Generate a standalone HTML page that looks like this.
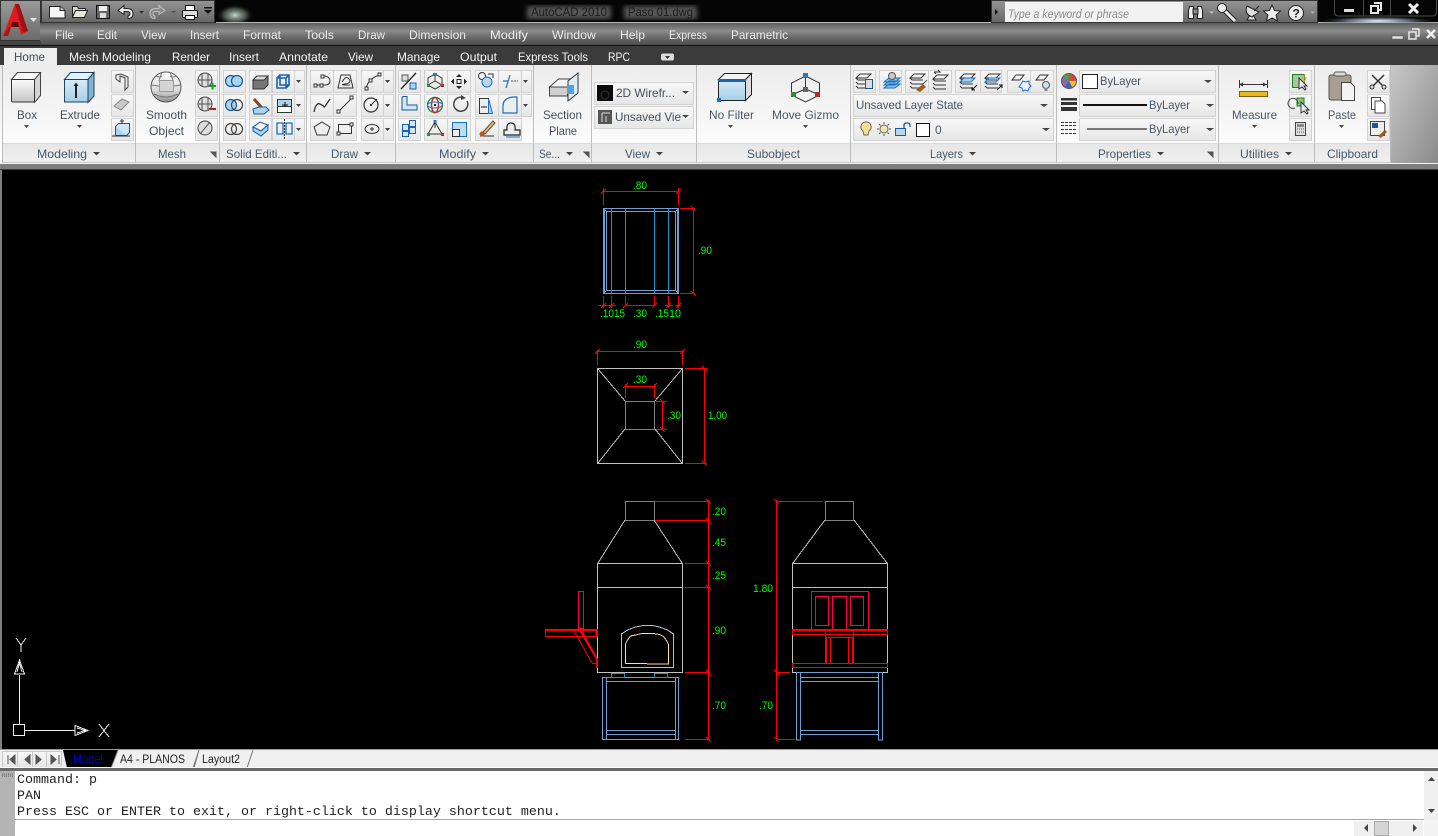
<!DOCTYPE html>
<html><head><meta charset="utf-8"><title>AutoCAD 2010 - Paso 01.dwg</title>
<style>
html,body{margin:0;padding:0;background:#000;overflow:hidden}
svg{display:block;font-family:"Liberation Sans",sans-serif}
.m{font-size:12px;fill:#ececec}
.t{font-size:12px;fill:#f4f4f4}
.r{font-size:12px;fill:#46505c}
.p{font-size:12px;fill:#47586a}
.g{font-size:11px;fill:#00ff00}
.c{font-family:"Liberation Mono",monospace;font-size:13.33px;fill:#222}
.n{fill:none;stroke:#333;stroke-width:1}
.cr{shape-rendering:crispEdges}
.cr path,.cr rect{fill:none}
.red path,.red rect{stroke:#ff0000}
.pk path,.pk rect{stroke:#ff0040}
.wh path,.wh rect{stroke:#c0c0c0}
.gy path,.gy rect{stroke:#808080}
.st path,.st rect{stroke:#6f9fd0}
.cy path,.cy rect{stroke:#1b95c8}
</style></head>
<body>
<svg width="1438" height="836" viewBox="0 0 1438 836" xmlns="http://www.w3.org/2000/svg">
<defs>
<linearGradient id="bar" x1="0" y1="0" x2="0" y2="1"><stop offset="0" stop-color="#5c5c5c"/><stop offset=".35" stop-color="#8c8c8c"/><stop offset=".65" stop-color="#6a6a6a"/><stop offset="1" stop-color="#4c4c4c"/></linearGradient>
<linearGradient id="qat" x1="0" y1="0" x2="0" y2="1"><stop offset="0" stop-color="#959595"/><stop offset="1" stop-color="#666"/></linearGradient>
<linearGradient id="app" x1="0" y1="0" x2="0" y2="1"><stop offset="0" stop-color="#9a9a9a"/><stop offset="1" stop-color="#6a6a6a"/></linearGradient>
<linearGradient id="rib" x1="0" y1="0" x2="0" y2="1"><stop offset="0" stop-color="#ececec"/><stop offset="1" stop-color="#ffffff"/></linearGradient>
<linearGradient id="lab" x1="0" y1="0" x2="0" y2="1"><stop offset="0" stop-color="#e6e6e6"/><stop offset="1" stop-color="#f0f0f0"/></linearGradient>
<linearGradient id="btn" x1="0" y1="0" x2="0" y2="1"><stop offset="0" stop-color="#f8f8f8"/><stop offset="1" stop-color="#e6e6e6"/></linearGradient>
<linearGradient id="end" x1="0" y1="0" x2="1" y2="1"><stop offset="0" stop-color="#c8c8c8"/><stop offset="1" stop-color="#8a8a8a"/></linearGradient>
<linearGradient id="bluebox" x1="0" y1="0" x2="0" y2="1"><stop offset="0" stop-color="#d8ecf8"/><stop offset="1" stop-color="#a4cfe8"/></linearGradient>
<linearGradient id="wbox" x1="0" y1="0" x2="0" y2="1"><stop offset="0" stop-color="#fbfbfb"/><stop offset="1" stop-color="#c4c4c4"/></linearGradient>
<linearGradient id="sph" x1="0" y1="0" x2="0" y2="1"><stop offset="0" stop-color="#fdfdfd"/><stop offset=".6" stop-color="#dcdcdc"/><stop offset="1" stop-color="#8f8f8f"/></linearGradient>
<radialGradient id="glo1" cx=".5" cy=".6" r=".5"><stop offset="0" stop-color="#c8d8cc"/><stop offset=".6" stop-color="#5a6a60" stop-opacity=".7"/><stop offset="1" stop-color="#000" stop-opacity="0"/></radialGradient>
<radialGradient id="glo2" cx=".5" cy=".5" r=".5"><stop offset="0" stop-color="#f4f8ff"/><stop offset=".5" stop-color="#8898a8" stop-opacity=".7"/><stop offset="1" stop-color="#000" stop-opacity="0"/></radialGradient>
<filter id="bl2"><feGaussianBlur stdDeviation="2.500"/></filter>
<rect id="B" width="22" height="22" fill="url(#btn)" stroke="#d2d2d2" x=".5" y=".5"/>
<rect id="B2" width="46" height="22" fill="url(#btn)" stroke="#d2d2d2" x=".5" y=".5"/>
<path id="A" d="M0 0h7l-3.500 3.500z" fill="#444"/>
<path id="L" d="M0 5l4-4h11l-4 4zM0 5l2 2h11M0 9l2 2h11M0 13l2 2h11" fill="none" stroke="#333"/>
</defs>

<!-- title bar -->
<rect width="1438" height="23" fill="#050505"/>
<rect x="216" y="2" width="38" height="22" fill="url(#glo1)"/>
<rect x="527" y="6" width="84" height="13" fill="#555" filter="url(#bl2)"/>
<rect x="624" y="6" width="73" height="13" fill="#555" filter="url(#bl2)"/>
<text x="531" y="16" font-size="12" fill="#1c1c1c" textLength="76" lengthAdjust="spacingAndGlyphs">AutoCAD 2010</text>
<text x="628" y="16" font-size="12" fill="#1c1c1c" textLength="65" lengthAdjust="spacingAndGlyphs">Paso 01.dwg</text>
<rect x="216" y="22" width="1222" height="1" fill="#b8b8b8"/>
<!-- app menu button -->
<rect x="0.500" y="0.500" width="40" height="40" fill="url(#app)" stroke="#333"/>
<path d="M3 36 L15 4 L19 4 L28 31 L21 35 L19 27 L11 27 L8 36z" fill="#e0181f"/>
<path d="M15 4 L19 4 L28 31 L23 32z" fill="#a01218"/>
<path d="M12 22h6l1 5h-8z" fill="#5c0a0e"/>
<path d="M3 36l5 0 3-9 -2 0z" fill="#b01218"/>
<path d="M30 18h7l-3.500 4z" fill="#e8e8e8"/>
<!-- QAT -->
<rect x="41.500" y="0.500" width="173" height="22" fill="url(#qat)" stroke="#333"/>
<path d="M49.500 6.500h11l4.500 4v7.500h-15.500z" fill="#f6f6f6" stroke="#222"/><path d="M60 6.500v4h5" fill="#ccc" stroke="#222"/>
<path d="M72.500 17.500v-11h5l1 2h7v2" fill="#d8d8c8" stroke="#222"/><path d="M72.500 17.500l3-7h12l-3 7z" fill="#e8e8d8" stroke="#222"/>
<rect x="96.500" y="5.500" width="13" height="13" fill="#666" stroke="#111"/><rect x="99" y="6" width="8" height="5" fill="#f0f0f0"/><rect x="100" y="13" width="6" height="5" fill="#ddd"/>
<path d="M118 10.500l6-5v3h3q6 0 6 5t-5 5v-2.500q2-.5 2-2.500t-3-2h-3v3z" fill="#eee" stroke="#222"/>
<path d="M139 11h5l-2.500 2.500z" fill="#333"/>
<path d="M165 10.500l-6-5v3h-3q-6 0-6 5t5 5v-2.500q-2-.5-2-2.500t3-2h3v3z" fill="#8a8a8a" stroke="#c0c0c0"/>
<path d="M171 11h5l-2.500 2.500z" fill="#555"/>
<rect x="182.500" y="10.500" width="15" height="7" rx="1" fill="#ddd" stroke="#111"/><rect x="185.500" y="5.500" width="9" height="5" fill="#fff" stroke="#111"/><rect x="185.500" y="15.500" width="9" height="4" fill="#fff" stroke="#111"/>
<rect x="204" y="7" width="8" height="1.500" fill="#111"/><path d="M204 10h8l-4 4z" fill="#111"/>

<!-- search -->
<rect x="991.500" y="0.500" width="326" height="22" fill="url(#qat)" stroke="#333"/>
<path d="M995 9l3 3-3 3z" fill="#111"/>
<rect x="1005" y="2" width="178" height="20" fill="#f2f2f2"/>
<text x="1008" y="18" font-size="11.500" font-style="italic" fill="#8a8a8a" textLength="121" lengthAdjust="spacingAndGlyphs">Type a keyword or phrase</text>
<path d="M1188.500 10.500l1-4h4v12h-5zM1197.500 6.500h4l1 4v8h-5z" fill="#eee" stroke="#222"/><rect x="1193" y="9" width="5" height="5" fill="#888" stroke="#222"/>
<path d="M1209 11.500h5l-2.500 2z" fill="#ccc"/>
<path d="M1222 8l13 13" stroke="#222" stroke-width="5"/><path d="M1222 8l13 13" stroke="#eee" stroke-width="3"/><circle cx="1222" cy="8" r="4.500" fill="#eee" stroke="#222"/>
<path d="M1247 6q-3 8 5 11l7-5zM1250 15l-3 5h9l-3-5M1254 11l5-5" fill="#ddd" stroke="#222"/>
<path d="M1272 5l2.500 5.500 6 .5-4.500 4 1.500 6-5.500-3-5.500 3 1.500-6-4.500-4 6-.5z" fill="#eee" stroke="#222"/>
<circle cx="1296" cy="13" r="7.500" fill="#eee" stroke="#222"/><text x="1292.500" y="17.500" font-size="12" font-weight="bold" fill="#222">?</text>
<path d="M1310 11.500h5l-2.500 2z" fill="#bbb"/>
<!-- window buttons -->
<ellipse cx="1378" cy="21" rx="62" ry="5" fill="url(#glo2)"/>
<path d="M1334.500 0v12q0 4 4 4h94q4 0 4-4V0M1363.500 0v16M1390.500 0v16" fill="none" stroke="#4a4a4a"/>
<rect x="1344" y="9" width="10" height="3" fill="#ddd"/>
<path d="M1371 6h7v7h-7zM1374 3h7v7h-3" fill="none" stroke="#e6e6e6" stroke-width="2"/>
<path d="M1409 4l9 9M1418 4l-9 9" stroke="#f0f0f0" stroke-width="3"/>

<!-- menu bar -->
<rect x="40" y="23" width="1398" height="22" fill="url(#bar)"/>
<rect x="0" y="41" width="41" height="4" fill="#444"/>
<rect x="0" y="45" width="1438" height="1" fill="#111"/>
<g class="m">
<text x="55" y="39" textLength="19" lengthAdjust="spacingAndGlyphs">File</text>
<text x="97" y="39" textLength="20" lengthAdjust="spacingAndGlyphs">Edit</text>
<text x="141" y="39" textLength="25" lengthAdjust="spacingAndGlyphs">View</text>
<text x="190" y="39" textLength="29" lengthAdjust="spacingAndGlyphs">Insert</text>
<text x="243" y="39" textLength="38" lengthAdjust="spacingAndGlyphs">Format</text>
<text x="305" y="39" textLength="29" lengthAdjust="spacingAndGlyphs">Tools</text>
<text x="358" y="39" textLength="27" lengthAdjust="spacingAndGlyphs">Draw</text>
<text x="409" y="39" textLength="57" lengthAdjust="spacingAndGlyphs">Dimension</text>
<text x="490" y="39" textLength="38" lengthAdjust="spacingAndGlyphs">Modify</text>
<text x="552" y="39" textLength="44" lengthAdjust="spacingAndGlyphs">Window</text>
<text x="620" y="39" textLength="25" lengthAdjust="spacingAndGlyphs">Help</text>
<text x="669" y="39" textLength="38" lengthAdjust="spacingAndGlyphs">Express</text>
<text x="731" y="39" textLength="57" lengthAdjust="spacingAndGlyphs">Parametric</text>
</g>
<rect x="1392" y="36" width="11" height="3" fill="#e4e4e4" stroke="#555" stroke-width=".5"/>
<path d="M1409 32h7v7h-7zM1412 29h7v7h-3" fill="none" stroke="#e8e8e8" stroke-width="1.500"/>
<path d="M1427 30l8 8M1435 30l-8 8" stroke="#eee" stroke-width="2.500"/>

<!-- ribbon tabs -->
<rect x="0" y="46" width="1438" height="19" fill="#3b3b3b"/>
<rect x="4" y="48" width="53" height="17" fill="#eeeeee"/>
<text x="14" y="61" font-size="12" fill="#3d4b5a" textLength="31" lengthAdjust="spacingAndGlyphs">Home</text>
<g class="t">
<text x="69" y="61" textLength="82" lengthAdjust="spacingAndGlyphs">Mesh Modeling</text>
<text x="172" y="61" textLength="38" lengthAdjust="spacingAndGlyphs">Render</text>
<text x="229" y="61" textLength="30" lengthAdjust="spacingAndGlyphs">Insert</text>
<text x="279" y="61" textLength="49" lengthAdjust="spacingAndGlyphs">Annotate</text>
<text x="348" y="61" textLength="25" lengthAdjust="spacingAndGlyphs">View</text>
<text x="397" y="61" textLength="43" lengthAdjust="spacingAndGlyphs">Manage</text>
<text x="460" y="61" textLength="37" lengthAdjust="spacingAndGlyphs">Output</text>
<text x="518" y="61" textLength="70" lengthAdjust="spacingAndGlyphs">Express Tools</text>
<text x="608" y="61" textLength="22" lengthAdjust="spacingAndGlyphs">RPC</text>
</g>
<rect x="661" y="53.500" width="13" height="7" rx="2" fill="#dcdcdc"/><path d="M665 56h5l-2.500 3z" fill="#333"/>

<!-- ribbon body -->
<rect x="0" y="65" width="1391" height="98" fill="url(#rib)"/>
<rect x="1391" y="65" width="47" height="98" fill="url(#end)"/>
<rect x="2" y="143" width="1389" height="19" fill="url(#lab)"/>
<rect x="2" y="143" width="1389" height="1" fill="#dcdcdc"/>
<rect x="2" y="162" width="1389" height="1" fill="#c8c8c8"/>
<g fill="#bdbdbd">
<rect x="2" y="65" width="1" height="98"/><rect x="135" y="65" width="1" height="98"/><rect x="219" y="65" width="1" height="98"/><rect x="306" y="65" width="1" height="98"/><rect x="395" y="65" width="1" height="98"/><rect x="533" y="65" width="1" height="98"/><rect x="591" y="65" width="1" height="98"/><rect x="696" y="65" width="1" height="98"/><rect x="850" y="65" width="1" height="98"/><rect x="1056" y="65" width="1" height="98"/><rect x="1218" y="65" width="1" height="98"/><rect x="1314" y="65" width="1" height="98"/><rect x="1390" y="65" width="1" height="98"/>
</g>
<rect x="0" y="163" width="1438" height="1" fill="#f4f4f4"/>
<rect x="0" y="164" width="1438" height="5" fill="#7e7e7e"/>
<rect x="0" y="169" width="1438" height="1" fill="#3a3a3a"/>

<!-- panel labels -->
<g class="p">
<text x="37" y="158" textLength="50" lengthAdjust="spacingAndGlyphs">Modeling</text>
<text x="158" y="158" textLength="28" lengthAdjust="spacingAndGlyphs">Mesh</text>
<text x="226" y="158" textLength="61" lengthAdjust="spacingAndGlyphs">Solid Editi...</text>
<text x="331" y="158" textLength="27" lengthAdjust="spacingAndGlyphs">Draw</text>
<text x="439" y="158" textLength="37" lengthAdjust="spacingAndGlyphs">Modify</text>
<text x="539" y="158" textLength="21" lengthAdjust="spacingAndGlyphs">Se...</text>
<text x="625" y="158" textLength="25" lengthAdjust="spacingAndGlyphs">View</text>
<text x="747" y="158" textLength="53" lengthAdjust="spacingAndGlyphs">Subobject</text>
<text x="930" y="158" textLength="33" lengthAdjust="spacingAndGlyphs">Layers</text>
<text x="1098" y="158" textLength="53" lengthAdjust="spacingAndGlyphs">Properties</text>
<text x="1240" y="158" textLength="39" lengthAdjust="spacingAndGlyphs">Utilities</text>
<text x="1327" y="158" textLength="51" lengthAdjust="spacingAndGlyphs">Clipboard</text>
</g>
<use href="#A" x="93" y="152"/><use href="#A" x="293" y="152"/><use href="#A" x="364" y="152"/><use href="#A" x="482" y="152"/><use href="#A" x="566" y="152"/><use href="#A" x="656" y="152"/><use href="#A" x="969" y="152"/><use href="#A" x="1157" y="152"/><use href="#A" x="1285" y="152"/>
<path d="M211 152l5 0 0 5zM211 152l5 5" fill="#555" stroke="#555"/><path d="M584 152h5v5zM584 152l5 5" fill="#555" stroke="#555"/><path d="M1208 152h5v5zM1208 152l5 5" fill="#555" stroke="#555"/>

<!-- big labels -->
<g class="r">
<text x="17" y="119" textLength="20" lengthAdjust="spacingAndGlyphs">Box</text>
<text x="60" y="119" textLength="40" lengthAdjust="spacingAndGlyphs">Extrude</text>
<text x="146" y="119" textLength="41" lengthAdjust="spacingAndGlyphs">Smooth</text>
<text x="149" y="135" textLength="35" lengthAdjust="spacingAndGlyphs">Object</text>
<text x="543" y="119" textLength="39" lengthAdjust="spacingAndGlyphs">Section</text>
<text x="549" y="135" textLength="28" lengthAdjust="spacingAndGlyphs">Plane</text>
</g>
<g class="p">
<text x="709" y="119" textLength="45" lengthAdjust="spacingAndGlyphs">No Filter</text>
<text x="772" y="119" textLength="67" lengthAdjust="spacingAndGlyphs">Move Gizmo</text>
<text x="1232" y="119" textLength="45" lengthAdjust="spacingAndGlyphs">Measure</text>
<text x="1328" y="119" textLength="28" lengthAdjust="spacingAndGlyphs">Paste</text>
</g>
<path d="M24 125h5l-2.500 3zM77 125h5l-2.500 3zM728 125h5l-2.500 3zM803 125h5l-2.500 3zM1252 125h5l-2.500 3zM1339 125h5l-2.500 3z" fill="#444"/>

<!-- Big icons -->
<path d="M11.500 79.500l6-7h23v23l-6 7z" fill="#d4d4d4" stroke="#444"/><path d="M11.500 79.500l6-7h23l-6 7z" fill="#f8f8f8" stroke="#444"/><rect x="11.500" y="79.500" width="23" height="22.500" rx="1" fill="url(#wbox)" stroke="#333"/>
<path d="M64.500 79.500l6-7h23.500l-6 7z" fill="#e0f4fc" stroke="#24415c"/><path d="M88 79.500l6-7v23.500l-6 6.500z" fill="#7fb4d4" stroke="#24415c"/><rect x="64.500" y="79.500" width="23.500" height="22.500" fill="url(#bluebox)" stroke="#24415c"/><path d="M75 98V86h-1.500l2.500-3.500 2.500 3.500H77v12z" fill="#222"/>
<circle cx="166" cy="87" r="15" fill="url(#sph)" stroke="#555"/><path d="M151.500 85q14.500 3 29 0M156 76q4 2 6 0M176 76q-4 2-6 0M162 72q-3 8-3 9M170 72q3 8 3 9M154 94q12 6 24 0" fill="none" stroke="#777"/><rect x="159.500" y="80.500" width="14" height="11" fill="#d4d4d4" stroke="#999"/>
<path d="M549.500 87l9-8h14l-5 8z" fill="#f4f4f4" stroke="#444"/><path d="M549.500 87h18v9h-18z" fill="#cfcfcf" stroke="#444"/><path d="M568 81l10-8v20l-10 8z" fill="#dcecf6" stroke="#333"/><rect x="567" y="85" width="7" height="9" fill="#5aa0d8"/>
<rect x="718.500" y="79.500" width="27" height="21" fill="url(#bluebox)" stroke="#222"/><path d="M718.500 79.500l6-6h27l-6 6z" fill="#f2f2f2" stroke="#222"/><path d="M745.500 79.500l6-6v21l-6 6z" fill="#ddd" stroke="#222"/><rect x="718" y="79" width="28" height="3" fill="#1a62b0"/><rect x="717" y="98" width="4" height="4" fill="#1a70c8"/>
<path d="M805.500 76l14 7v12l-14 7-14-7V83zM805.500 89v-13M805.500 89l-14 6M805.500 89l14 6" fill="none" stroke="#333"/><rect x="803" y="73" width="5" height="5" fill="#2a78c8"/><rect x="791" y="92" width="5" height="5" fill="#2c8c3a"/><rect x="815" y="92" width="5" height="5" fill="#b82a2a"/><rect x="803" y="87" width="5" height="5" fill="#666"/>
<path d="M1239.500 80v8M1267.500 80v8M1239 84.500h28" class="n"/><path d="M1239 84.500l4-2v4zM1267 84.500l-4-2v4z" fill="#333"/><rect x="1239.500" y="91.500" width="28" height="5" fill="#e8b820" stroke="#7a6010"/>
<rect x="1329" y="75" width="22" height="25" rx="2" fill="#a89f92" stroke="#555"/><rect x="1334" y="72" width="12" height="4" rx="2" fill="#ddd" stroke="#555"/><path d="M1341.500 82.500h9l4 4v14h-13z" fill="#f4f4f4" stroke="#444"/>

<!-- Modeling small -->
<use href="#B" x="111" y="70"/><use href="#B" x="111" y="94"/><use href="#B" x="111" y="118"/>
<path d="M116 75l5-1 7 3v10l-3 3v-12l-5-2v6l-4-3z" fill="#eee" stroke="#444"/>
<path d="M114 106l8-7 7 3-8 8z" fill="#c8c8c8" stroke="#888"/>
<rect x="115.500" y="126.500" width="11" height="9" fill="#a8d4ec" stroke="#1a5a9a"/><path d="M115.500 126.500l3-3h11v9l-3 3" fill="#cfe6f4" stroke="#1a5a9a"/><path d="M122 119v5M120 121h4M112 136h18" stroke="#333" fill="none"/>
<!-- Mesh small -->
<use href="#B" x="195" y="70"/><use href="#B" x="195" y="94"/><use href="#B" x="195" y="118"/>
<g fill="#ddd" stroke="#444"><circle cx="205" cy="80" r="7"/><circle cx="205" cy="104" r="7"/><circle cx="205" cy="128" r="7"/></g>
<path d="M198 80h14M202 73v14M208 73v14M198 104h14M202 97v14M208 97v14M200 134l10-12" stroke="#555" fill="none"/>
<path d="M209 85h7v2h-7zM211.500 82.500h2v7h-2z" fill="#1c9a28"/><rect x="209" y="108" width="7" height="2" fill="#b81c1c"/>
<!-- Solid Editing -->
<use href="#B" x="223" y="70"/><use href="#B" x="223" y="94"/><use href="#B" x="223" y="118"/>
<use href="#B" x="249" y="70"/><use href="#B" x="249" y="94"/><use href="#B" x="249" y="118"/>
<use href="#B" x="272" y="70"/><use href="#B" x="272" y="94"/><use href="#B" x="272" y="118"/>
<g fill="url(#btn)" stroke="#d2d2d2"><rect x="294.500" y="70.500" width="10" height="22"/><rect x="294.500" y="94.500" width="10" height="22"/><rect x="294.500" y="118.500" width="10" height="22"/></g>
<path d="M296 80h5l-2.500 3zM296 104h5l-2.500 3zM296 128h5l-2.500 3z" fill="#444"/>
<g fill="#a8d4ec" stroke="#1a5a9a" stroke-width="1.200"><circle cx="231" cy="81" r="5.500"/><circle cx="237" cy="81" r="5.500"/><circle cx="231" cy="105" r="5.500"/><circle cx="237" cy="105" r="5.500" fill="none" stroke="#444"/><circle cx="231" cy="129" r="5.500" fill="none" stroke="#444"/><circle cx="237" cy="129" r="5.500" fill="none" stroke="#444"/></g>
<path d="M253 80l4-4h11v9l-4 4h-11z" fill="#777" stroke="#333"/><path d="M257 76h11l-4 4h-11z" fill="#ddd" stroke="#333"/>
<path d="M254 99l8 9" stroke="#8a4030" stroke-width="3" fill="none"/><path d="M253 109l6-2h7l3 3-5 4h-10z" fill="#a8d4ec" stroke="#1a5a9a"/>
<path d="M253 127l7-5 8 3-7 6z" fill="#f4f4f4" stroke="#1a5a9a"/><path d="M253 127v4l8 5 7-6v-5l-7 6z" fill="#a8d4ec" stroke="#1a5a9a"/>
<path d="M277 78h9v10h-9zM280 75h9v10h-9zM277 78l3-3M286 78l3-3M286 88l3-3" fill="none" stroke="#1a62b0" stroke-width="1.600"/>
<rect x="277.500" y="99.500" width="14" height="13" fill="#fff" stroke="#333"/><rect x="277.500" y="99.500" width="14" height="7" fill="#a8d4ec" stroke="#333"/><path d="M282 105h6M285 102v5" stroke="#111" fill="none"/>
<path d="M277 123h6v11h-6zM286 123h6v11h-6z" fill="none" stroke="#1a6ec4" stroke-width="1.300"/><path d="M284.500 119v20" stroke="#333" stroke-dasharray="2 1"/>
<!-- Draw -->
<use href="#B2" x="310" y="70"/><use href="#B2" x="310" y="94"/><use href="#B2" x="310" y="118"/>
<path d="M333.500 70v23M333.500 94v23M333.500 118v23" stroke="#d2d2d2"/>
<use href="#B" x="361" y="70"/><use href="#B" x="361" y="94"/><use href="#B" x="361" y="118"/>
<g fill="url(#btn)" stroke="#d2d2d2"><rect x="383.500" y="70.500" width="10" height="22"/><rect x="383.500" y="94.500" width="10" height="22"/><rect x="383.500" y="118.500" width="10" height="22"/></g>
<path d="M385 80h5l-2.500 3zM385 104h5l-2.500 3zM385 128h5l-2.500 3z" fill="#444"/>
<path d="M315 85h10q5 0 5-4t-5-5h-2" class="n"/><g fill="#fff" stroke="#333"><rect x="314" y="84" width="3" height="3"/><rect x="320" y="84" width="3" height="3"/><rect x="321" y="75" width="3" height="3"/></g>
<path d="M338 88l3-13h9l3 13zM342 82q4-7 7-3t-4 5 5 1" class="n"/>
<path d="M366 89q2-11 14-14" class="n"/><g fill="#fff" stroke="#333"><rect x="365" y="87" width="3" height="3"/><rect x="378" y="73" width="3" height="3"/><rect x="369" y="79" width="3" height="3"/></g>
<path d="M314 112q2-10 6-8t4 3 6-8" fill="none" stroke="#333" stroke-width="1.300"/>
<path d="M338 112l14-14" class="n"/><g fill="#fff" stroke="#333"><rect x="337" y="110" width="3" height="3"/><rect x="350" y="96" width="3" height="3"/></g>
<circle cx="371" cy="105" r="7" fill="none" stroke="#333" stroke-width="1.200"/><path d="M371 105l6-6" class="n"/><rect x="370" y="104" width="2" height="2" fill="#333"/>
<path d="M322 122l8 5-3 8h-10l-3-8z" fill="#eee" stroke="#333"/>
<rect x="338.500" y="124.500" width="13" height="9" class="n" fill="none"/><g fill="#fff" stroke="#333"><rect x="337" y="132" width="3" height="3"/><rect x="350" y="123" width="3" height="3"/></g>
<ellipse cx="372" cy="129" rx="7" ry="4.500" fill="none" stroke="#333"/><path d="M370 129h4M372 127v4" stroke="#333"/>
<!-- Modify -->
<use href="#B" x="398" y="70"/><use href="#B" x="398" y="94"/><use href="#B" x="398" y="118"/>
<use href="#B2" x="424" y="70"/><use href="#B2" x="424" y="94"/><use href="#B2" x="424" y="118"/>
<path d="M447.500 70v23M447.500 94v23M447.500 118v23" stroke="#d2d2d2"/>
<use href="#B2" x="475" y="70"/><use href="#B2" x="475" y="94"/><use href="#B2" x="475" y="118"/>
<path d="M498.500 70v23M498.500 94v23M498.500 118v23" stroke="#d2d2d2"/>
<g fill="url(#btn)" stroke="#d2d2d2"><rect x="521.500" y="70.500" width="10" height="22"/><rect x="521.500" y="94.500" width="10" height="22"/></g>
<path d="M523 80h5l-2.500 3zM523 104h5l-2.500 3z" fill="#444"/>
<path d="M401 89l15-16" stroke="#222" stroke-width="1.300"/><path d="M402 75h6v6h-6z" fill="#ddd" stroke="#555"/><path d="M410 83h6v6h-6z" fill="#a8d4ec" stroke="#1a62b0"/>
<path d="M402 110V98q0-1.500 2-1.500h3v8.500h10v5z" fill="#cfe6f4" stroke="#1a5a9a"/>
<g fill="#cfe6f4" stroke="#1a62b0"><rect x="402.500" y="124.500" width="6" height="6"/><rect x="409.500" y="120.500" width="6" height="6"/><rect x="402.500" y="131.500" width="6" height="5"/><rect x="409.500" y="127.500" width="6" height="6"/></g>
<path d="M435 74l7 4v7l-7 4-7-4v-7zM435 81l-7 4M435 81l7 4M435 81v-7" class="n"/><rect x="433" y="73" width="4" height="3" fill="#2a78c8"/><rect x="427" y="84" width="3" height="3" fill="#2c8c3a"/><rect x="441" y="84" width="3" height="3" fill="#b82a2a"/>
<path d="M459 74l3 3h-6zM459 89l3-3h-6zM451 81.500l3-3v6zM467 81.500l-3-3v6z" fill="#222"/><rect x="457" y="79.500" width="4" height="4" fill="none" stroke="#222"/>
<circle cx="435" cy="105" r="7.500" fill="none" stroke="#2c8c3a" stroke-width="1.400"/><ellipse cx="435" cy="105" rx="3.500" ry="7.500" fill="none" stroke="#c02a2a" stroke-width="1.400"/><ellipse cx="435" cy="105" rx="7.500" ry="3" fill="none" stroke="#2a6ec8"/><rect x="434" y="104" width="2" height="2" fill="#222"/>
<path d="M464 98a7 7 0 1 0 3 3" fill="none" stroke="#444" stroke-width="1.500"/><path d="M461 95l5 3-5 2z" fill="#444"/>
<path d="M435 122l-7 12h14zM435 122v6" class="n"/><rect x="433.500" y="120" width="3" height="3" fill="#2a78c8"/><rect x="427" y="133" width="3" height="3" fill="#2c8c3a"/><rect x="441" y="133" width="3" height="3" fill="#b82a2a"/>
<rect x="452.500" y="122.500" width="14" height="14" fill="#bcdcf0" stroke="#1a6ec4"/><rect x="452.500" y="129.500" width="7" height="7" fill="#eee" stroke="#333"/>
<circle cx="482" cy="76" r="3.500" class="n"/><circle cx="487" cy="82" r="5" fill="#b8d8ec" stroke="#1a6ec4"/><path d="M488 74h5v4" class="n"/>
<path d="M503 81h5M506 88l4-13" fill="none" stroke="#1a6ec4" stroke-width="1.200"/><path d="M511 81h7" stroke="#444" stroke-dasharray="2 1"/>
<path d="M479.500 98.500h9v15h-9z" fill="#eee" stroke="#333"/><path d="M488.500 98.500l4 15h-4z" fill="#a8d4ec" stroke="#1a6ec4"/><path d="M481 107h6" stroke="#111"/>
<path d="M503 113v-7q0-8 10-9h4v16z" fill="#eee" stroke="#1a6ec4" stroke-width="1.200"/>
<path d="M480 136h14" stroke="#333"/><path d="M483 132l10-11 2 2-10 11z" fill="#d8c090" stroke="#6a4a20"/><circle cx="482" cy="134" r="2.500" fill="#c8501c"/>
<path d="M504 135v-5h3q-1-7 4-7t4 7h5v5z" fill="#eee" stroke="#222" stroke-width="1.200"/><path d="M506 137h14" stroke="#1a6ec4"/>
<!-- View combos -->
<rect x="594.500" y="82.500" width="99" height="22" fill="url(#btn)" stroke="#d2d2d2"/>
<rect x="594.500" y="106.500" width="99" height="22" fill="url(#btn)" stroke="#d2d2d2"/>
<rect x="597" y="85" width="16" height="16" fill="#0a0a0a"/><circle cx="605" cy="95" r="4" fill="none" stroke="#333"/>
<rect x="598" y="110" width="14" height="14" fill="#555"/><path d="M602 113h8M602 113v9M606 116v6" stroke="#ddd" fill="none"/>
<text x="616" y="97" class="r" textLength="59" lengthAdjust="spacingAndGlyphs">2D Wirefr...</text>
<text x="615" y="121" class="r" textLength="66" lengthAdjust="spacingAndGlyphs">Unsaved Vie</text>
<path d="M682 91h7l-3.500 3zM682 115h7l-3.500 3z" fill="#444"/>
<!-- Layers -->
<use href="#B" x="853" y="70"/><use href="#B" x="879" y="70"/><use href="#B2" x="905" y="70"/><use href="#B2" x="955" y="70"/><use href="#B2" x="1007" y="70"/>
<path d="M928.500 70v23M980.500 70v23M1030.500 70v23" stroke="#d2d2d2"/>
<use href="#L" x="856" y="73"/><use href="#L" x="910" y="73"/><use href="#L" x="933" y="74"/><use href="#L" x="960" y="73"/><use href="#L" x="985" y="73"/>
<rect x="865.500" y="79.500" width="7" height="9" fill="#ddd" stroke="#1a5a9a"/>
<path d="M884 82l5-4h11l-5 4zM884 85l5-4h11l-5 4zM884 88l5-4h11l-5 4z" fill="#8cc0e4" stroke="#1a6ec4"/><circle cx="892" cy="76" r="3.500" fill="#ccc" stroke="#555"/>
<path d="M916 90l7-6 3 3-6 5z" fill="#a05a20"/><path d="M923 84l4-4" stroke="#555"/>
<path d="M934 72h6l-2-2M934 72l2 2" fill="none" stroke="#333"/>
<path d="M960 82l4-4h11l-4 4z" fill="#a8d4ec" stroke="#1a6ec4"/><path d="M985 82l4-4h11l-4 4z" fill="none" stroke="#1a6ec4"/><path d="M972 90l5-5M972 87v3h3M997 90l5-5M999 85h3v3" stroke="#111" fill="none"/>
<path d="M1012 80l4-5h8l-4 5zM1036 80l4-5h8l-4 5z" class="n"/>
<path d="M1021 85l2-3 3 1 3-1 0 3 2 2-2 2-1 3-3-1-2 1-1-3-3-1z" fill="#eef" stroke="#1a6ec4" transform="translate(0 -1)"/>
<circle cx="1046" cy="85" r="3.500" fill="#cfe4f0" stroke="#555"/><rect x="1044.500" y="88" width="3" height="3" fill="#888"/>
<rect x="853.500" y="94.500" width="200" height="22" fill="url(#btn)" stroke="#d2d2d2"/>
<rect x="853.500" y="118.500" width="200" height="22" fill="url(#btn)" stroke="#d2d2d2"/>
<text x="856" y="109" class="p" textLength="107" lengthAdjust="spacingAndGlyphs">Unsaved Layer State</text>
<path d="M1040 104h8l-4 3zM1042 128h8l-4 3z" fill="#444"/>
<path d="M865 122a5 5 0 0 1 4 9l-1 4h-4l-1-4a5 5 0 0 1 2-9z" fill="#f6e090" stroke="#666"/>
<circle cx="884" cy="129" r="4" fill="#f6e8a8" stroke="#666"/><path d="M884 122v2M884 134v2M877 129h2M889 129h2M879 124l1.500 1.500M889 134l-1.500-1.500M889 124l-1.500 1.500M879 134l1.500-1.500" stroke="#555"/>
<rect x="895.500" y="128.500" width="10" height="7" fill="#b8d8ec" stroke="#1a5a9a"/><path d="M904 128v-3q0-2 3-2t3 2v2" fill="none" stroke="#1a5a9a" stroke-width="1.300"/>
<rect x="916.500" y="123.500" width="13" height="13" fill="#fff" stroke="#111"/>
<text x="935" y="134" class="p">0</text>
<!-- Properties -->
<circle cx="1069" cy="81" r="7.500" fill="#8a6ab0" stroke="#555"/><path d="M1069 81V74a7 7 0 0 1 7 7z" fill="#d84a30"/><path d="M1069 81h7a7 7 0 0 1-4 6z" fill="#e8c830"/><path d="M1069 81l-6-4a7 7 0 0 1 6-3z" fill="#48a048"/><path d="M1069 81l3 6a7 7 0 0 1-7 0z" fill="#4060c0"/>
<path d="M1061 98h16v2.500h-16zM1061 102h16v3h-16zM1061 107h16v4h-16z" fill="#333"/>
<path d="M1061 122.500h16M1061 125.500h16M1061 129.500h16M1061 133.500h16" stroke="#333" stroke-dasharray="3 1"/>
<rect x="1079.500" y="70.500" width="136" height="22" fill="url(#btn)" stroke="#d2d2d2"/>
<rect x="1079.500" y="94.500" width="136" height="22" fill="url(#btn)" stroke="#d2d2d2"/>
<rect x="1079.500" y="118.500" width="136" height="22" fill="url(#btn)" stroke="#d2d2d2"/>
<rect x="1082.500" y="74.500" width="15" height="14" fill="#fff" stroke="#222"/>
<text x="1100" y="85" class="p" textLength="41" lengthAdjust="spacingAndGlyphs">ByLayer</text>
<rect x="1083" y="104" width="64" height="2" fill="#111"/>
<text x="1149" y="109" class="p" textLength="41" lengthAdjust="spacingAndGlyphs">ByLayer</text>
<rect x="1087" y="128" width="60" height="2" fill="#777"/>
<text x="1149" y="133" class="p" textLength="41" lengthAdjust="spacingAndGlyphs">ByLayer</text>
<path d="M1204 80h8l-4 3zM1206 104h8l-4 3zM1206 128h8l-4 3z" fill="#444"/>
<!-- Utilities / Clipboard small -->
<use href="#B" x="1289" y="70"/><use href="#B" x="1289" y="94"/><use href="#B" x="1289" y="118"/>
<use href="#B" x="1367" y="70"/><use href="#B" x="1367" y="94"/><use href="#B" x="1367" y="118"/>
<rect x="1292.500" y="74.500" width="12" height="13" fill="#a8c898" stroke="#1a7a28"/><path d="M1299 78l0 11 3-2 3 3 1-1-2-3h3z" fill="#eee" stroke="#333"/><path d="M1305 74l-2 4h3l-2 4" stroke="#e8a020" fill="none"/>
<path d="M1297 98h7v8h-7z" fill="#8cc870" stroke="#1a7a28"/><path d="M1298 104a5 5 0 1 0-3 4" fill="none" stroke="#444"/><path d="M1301 102v11l3-2 3 3 1-1-2-3h3z" fill="#eee" stroke="#333"/>
<rect x="1295.500" y="122.500" width="10" height="13" fill="#ddd" stroke="#444"/><rect x="1297" y="124" width="7" height="3" fill="#888"/><path d="M1297 129h7M1297 132h7" stroke="#555" stroke-dasharray="1 1"/>
<path d="M1372 75l12 12M1384 75l-12 12" stroke="#333" stroke-width="1.500"/><circle cx="1372" cy="87" r="2" fill="#ddd" stroke="#333"/><circle cx="1384" cy="87" r="2" fill="#ddd" stroke="#333"/>
<rect x="1371.500" y="97.500" width="9" height="12" fill="#fff" stroke="#444"/><path d="M1375 101h7l3 3v9h-10z" fill="#fff" stroke="#444"/>
<rect x="1370.500" y="121.500" width="14" height="14" fill="#eee" stroke="#444"/><rect x="1372" y="123" width="6" height="5" fill="#1a5a9a"/><path d="M1378 136l7-6 2 2-6 6z" fill="#a05a20"/>

<!-- canvas -->
<rect x="0" y="170" width="1438" height="580" fill="#000"/>
<rect x="0" y="170" width="2" height="580" fill="#7e7e7e"/>

<!-- Drawing 1 -->
<g class="cr" stroke-width="1">
<g class="st"><rect x="603.500" y="208.500" width="75" height="85"/><rect x="606.500" y="211.500" width="69" height="79"/><path d="M604 209l3 3M678 209l-3 3M604 293l3-3M678 293l-3-3M604.500 209v84M677.500 209v84"/></g>
<g class="cy"><path d="M611.500 209v84M625.500 209v84M654.500 209v84M668.500 209v84"/></g>
<g class="red">
<path d="M603.500 188v17M678.500 188v17M602 191.500h77M600.500 194l5-5M676 194l5-5"/>
<path d="M680 208.500h15M680 293.500h15M693.500 208v86M691 206l5 5M691 291l5 5"/>
<path d="M603.500 296v12M611.500 296v12M625.500 296v10M654.500 296v10M668.500 296v12M678.500 296v12M625 305.500h30M598 305.500h10M608 305.500h8M665 305.500h8M675 305.500h6"/>
<path d="M601 308l5-5M609 308l5-5M623 308l5-5M652 308l5-5M666 308l5-5M676 308l5-5"/>
</g>
</g>
<g class="g">
<text x="633" y="189" textLength="14" lengthAdjust="spacingAndGlyphs">.80</text>
<text x="698" y="254" textLength="14" lengthAdjust="spacingAndGlyphs">.90</text>
<text x="600" y="317" textLength="14" lengthAdjust="spacingAndGlyphs">.10</text>
<text x="614" y="317" textLength="11" lengthAdjust="spacingAndGlyphs">15</text>
<text x="633" y="317" textLength="14" lengthAdjust="spacingAndGlyphs">.30</text>
<text x="655" y="317" textLength="14" lengthAdjust="spacingAndGlyphs">.15</text>
<text x="669" y="317" textLength="12" lengthAdjust="spacingAndGlyphs">10</text>
</g>
<!-- Drawing 2 -->
<g class="cr">
<g class="wh"><rect x="597.500" y="368.500" width="85" height="95"/><path d="M598 369l27 32M682 369l-27 32M598 463l27-34M682 463l-27-34"/></g>
<g class="gy"><rect x="625.500" y="401.500" width="29" height="28"/></g>
<g class="red">
<path d="M597.500 350v15M682.500 350v15M596 351.500h88M595 354l5-5M680 354l5-5"/>
<path d="M625.500 384v14M654.500 384v14M624 386.500h32M623 388l5-5M652 388l5-5"/>
<path d="M656 401.500h11M656 429.500h11M662.500 401v29M660 399l5 5M660 427l5 5"/>
<path d="M685 368.500h22M685 463.500h22M704.500 368v96M702 366l5 5M702 461l5 5"/>
</g>
</g>
<g class="g">
<text x="633" y="348" textLength="14" lengthAdjust="spacingAndGlyphs">.90</text>
<text x="633" y="383" textLength="14" lengthAdjust="spacingAndGlyphs">.30</text>
<text x="667" y="419" textLength="14" lengthAdjust="spacingAndGlyphs">.30</text>
<text x="708" y="419" textLength="19" lengthAdjust="spacingAndGlyphs">1.00</text>
</g>
<!-- Drawing 3 -->
<g class="cr">
<g class="gy"><rect x="625.500" y="501.500" width="29" height="19"/></g>
<g class="wh">
<path d="M625 520l-27 43M654 520l28 43"/>
<rect x="597.500" y="563.500" width="85" height="109"/><path d="M598 587.500h84"/>
<path d="M621.500 667.500V634l6-4 8-3 8-1.500h9l7 1.500 8 3 6 4v33.500z"/>
</g>
<path d="M625.500 663.500V644l2-4 3-4 5-1 6-1.500h12l6 1 4 2 3 4 2 4v19.500z" fill="none" stroke="#ffe080"/>
<g class="pk"><rect x="578.500" y="591.500" width="5" height="37"/></g>
<g class="red">
<rect x="545.500" y="629.500" width="52" height="7"/><path d="M545 630.500h52"/><path d="M597 629v8M596 629v8"/>
<path d="M574 631l18 32M580 631l17 29M581 631l17 29M582 631l16 29M592 663.500h5M597.500 660v8M596.500 660v8"/>
<path d="M708.500 500v240M655 501.500h55M655 520.500h55M685 563.500h25M685 587.500h25M685 672.500h25M685 739.500h25"/>
<path d="M706 499l5 5M706 518l5 5M706 561l5 5M706 585l5 5M706 670l5 5M706 737l5 5"/>
</g>
<g class="st">
<rect x="602.500" y="677.500" width="76" height="62"/><path d="M606.500 678v61M675.500 678v61M606 681.500h69M606 730.500h69M606 734.500h69"/>
</g>
<g class="cy"><rect x="611.500" y="673.500" width="13" height="4"/><rect x="654.500" y="673.500" width="13" height="4"/></g>
</g>
<g class="g">
<text x="712" y="515" textLength="14" lengthAdjust="spacingAndGlyphs">.20</text>
<text x="712" y="546" textLength="14" lengthAdjust="spacingAndGlyphs">.45</text>
<text x="712" y="579" textLength="14" lengthAdjust="spacingAndGlyphs">.25</text>
<text x="712" y="634" textLength="14" lengthAdjust="spacingAndGlyphs">.90</text>
<text x="712" y="709" textLength="14" lengthAdjust="spacingAndGlyphs">.70</text>
</g>
<!-- Drawing 4 -->
<g class="cr">
<g class="gy"><rect x="825.500" y="501.500" width="28" height="19"/></g>
<g class="wh"><path d="M825 520l-32 43M854 520l33 43"/><rect x="792.500" y="563.500" width="95" height="109"/><path d="M793 587.500h94"/></g>
<g class="pk"><rect x="811.500" y="591.500" width="57" height="38"/><rect x="815.500" y="596.500" width="13" height="29"/><rect x="832.500" y="596.500" width="14" height="33"/><rect x="850.500" y="596.500" width="13" height="29"/></g>
<g class="red">
<rect x="792.500" y="629.500" width="95" height="5"/><path d="M792 630.500h96"/>
<path d="M825.500 630v34M826.500 637v27M853.500 630v34M852.500 637v27M825 637.500h29M830.500 638v25M848.500 638v25"/>
<rect x="792.500" y="663.500" width="95" height="4"/>
<path d="M776.500 500v240M777 501.500h46M777 672.500h13M777 739.500h18M774 499l5 5M774 670l5 5M774 737l5 5"/>
</g>
<g class="st"><path d="M796.500 672v68h4v-68M878.500 672v68h4v-68M801 677.500h77M796 672.500h87M801 681.500h77M801 730.500h77M801 734.500h77"/></g>
</g>
<g class="g">
<text x="753" y="592" textLength="20" lengthAdjust="spacingAndGlyphs">1.80</text>
<text x="759" y="709" textLength="14" lengthAdjust="spacingAndGlyphs">.70</text>
</g>

<!-- UCS -->
<g fill="none" stroke="#f0f0f0" stroke-width="1" class="cr">
<path d="M16 638l5 7 5-7M21 645v7"/>
<path d="M19.500 675v49M14.500 674l5-14 5 14zM17 672l2.500-9 2.500 9"/>
<rect x="13.500" y="724.500" width="11" height="11"/>
<path d="M25 730.500h50M75 725.500l13 5-13 5zM77 728l8 2.500-8 2.500"/>
<path d="M99 724l10 13M109 724l-10 13"/>
</g>

<!-- layout tabs -->
<rect x="0" y="750" width="1438" height="18" fill="#f0f0f0"/>
<rect x="0" y="749" width="1438" height="1" fill="#999"/>
<g fill="url(#btn)" stroke="#c8c8c8"><rect x="2.500" y="751.500" width="15" height="16"/><rect x="17.500" y="751.500" width="15" height="16"/><rect x="32.500" y="751.500" width="14" height="16"/><rect x="46.500" y="751.500" width="15" height="16"/></g>
<path d="M8 755v9M15 755l-5 4.500 5 4.500zM30 755l-5 4.500 5 4.500zM36 755l5 4.500-5 4.500zM59 755v9M51 755l5 4.500-5 4.500z" fill="#555" stroke="#555"/>
<path d="M63 750h55l-7 18H67z" fill="#000"/>
<text x="73" y="763" font-size="11.500" fill="#0000e0" textLength="30" lengthAdjust="spacingAndGlyphs">Model</text>
<path d="M118 750l-7 18h83l5-18M199 750l-6 18h54l6-18" fill="none" stroke="#777"/>
<text x="120" y="763" font-size="11.500" fill="#222" textLength="65" lengthAdjust="spacingAndGlyphs">A4 - PLANOS</text>
<text x="202" y="763" font-size="11.500" fill="#222" textLength="38" lengthAdjust="spacingAndGlyphs">Layout2</text>
<rect x="0" y="767" width="1438" height="1" fill="#fff"/>
<rect x="0" y="768" width="1438" height="3" fill="#6a6a6a"/>

<!-- command -->
<rect x="0" y="771" width="1438" height="65" fill="#fff"/>
<rect x="0" y="771" width="15" height="65" fill="#b4b4b4"/>
<path d="M2 774h11M2 776h11" stroke="#555" stroke-dasharray="1 1"/>
<text x="17" y="783" class="c">Command: p</text>
<text x="17" y="799" class="c">PAN</text>
<text x="17" y="815" class="c">Press ESC or ENTER to exit, or right-click to display shortcut menu.</text>
<rect x="15" y="819" width="1409" height="1" fill="#a8a8a8"/>
<rect x="1424" y="771" width="14" height="49" fill="#f0f0f0"/>
<path d="M1428 781h7l-3.500-4zM1428 809h7l-3.500 4z" fill="#444"/>
<rect x="1354" y="821" width="69" height="15" fill="#f0f0f0"/>
<rect x="1424" y="820" width="14" height="16" fill="#f4f4f4"/>
<path d="M1368 824v8l-4-4zM1413 824v8l4-4z" fill="#444"/>
<rect x="1374.500" y="821.500" width="14" height="14" fill="#d4d4d4" stroke="#aaa"/>
</svg>
</body></html>
